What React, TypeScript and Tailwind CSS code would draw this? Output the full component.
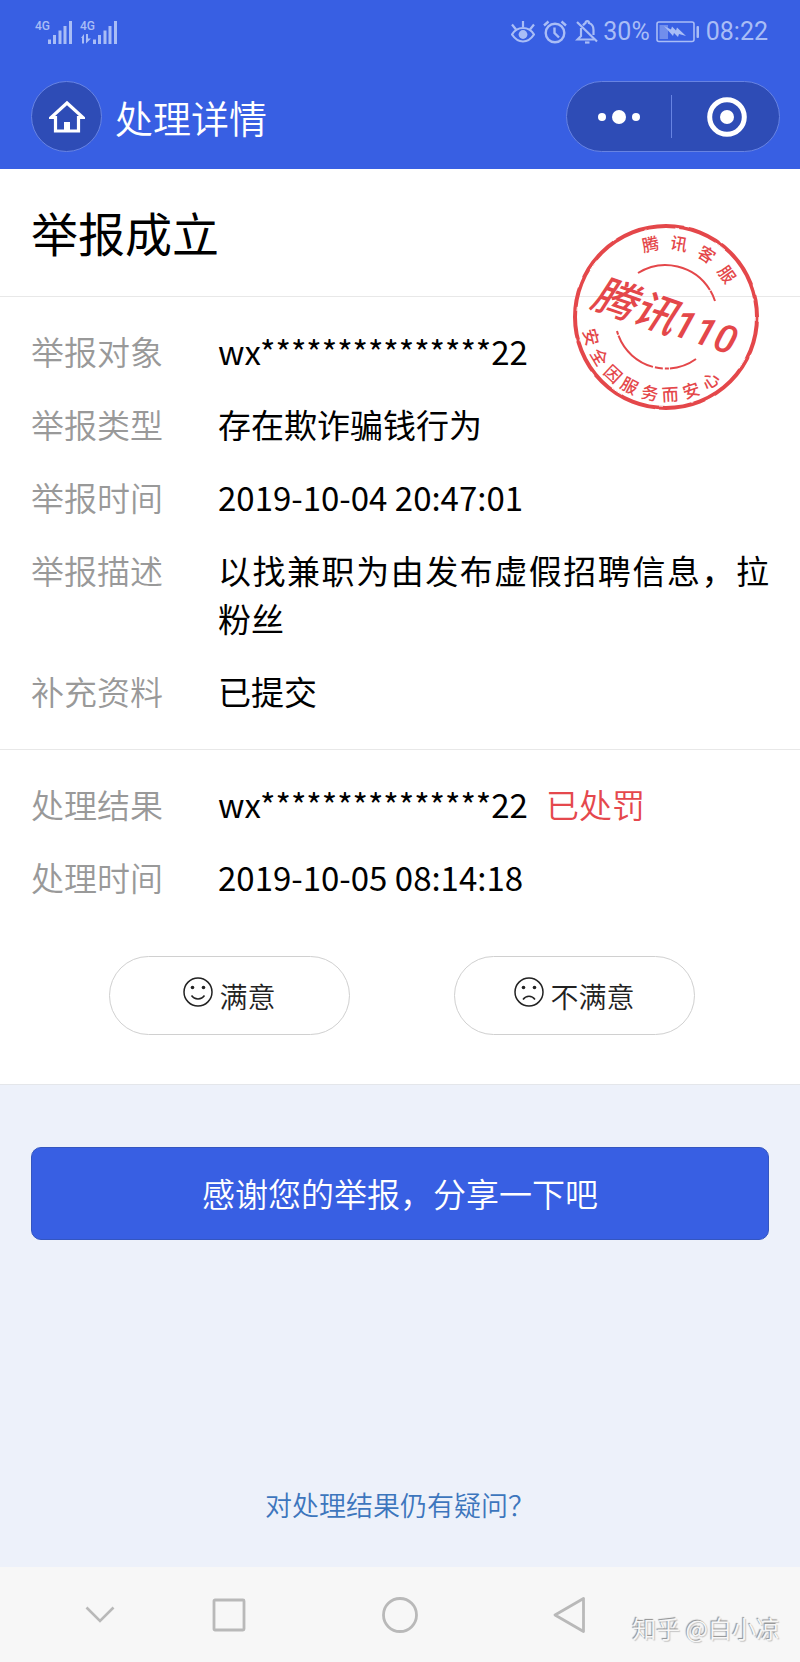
import React, { useState } from 'react';

type Glyph = { char: string; angle: number };

const stampTop: Glyph[] = [
  { char: '腾', angle: -12 },
  { char: '讯', angle: 10 },
  { char: '客', angle: 33 },
  { char: '服', angle: 55 },
];

const stampBottom: Glyph[] = [
  { char: '安', angle: 75 },
  { char: '全', angle: 59 },
  { char: '因', angle: 43 },
  { char: '服', angle: 28 },
  { char: '务', angle: 12 },
  { char: '而', angle: -3 },
  { char: '安', angle: -19 },
  { char: '心', angle: -35 },
];

const SignalIcon = ({ active = false }: { active?: boolean }) => (
  <svg width="38" height="26" viewBox="0 0 38 26" fill="currentColor">
    <text x="0" y="11" fontSize="12" fontFamily="Roboto, sans-serif" fontWeight="500">4G</text>
    {active && <path d="M1 19l3-4v9.5H2V19zM6 15h2v4.5h3l-5 5z" />}
    <rect x="13" y="20.5" width="3" height="4.5" />
    <rect x="18" y="16" width="3" height="9" />
    <rect x="23.5" y="11.5" width="3" height="13.5" />
    <rect x="28.5" y="7" width="3" height="18" />
    <rect x="34" y="2" width="3" height="23" />
  </svg>
);

const EyeIcon = () => (
  <svg width="24" height="24" viewBox="0 0 24 24" fill="none" stroke="currentColor" strokeWidth="2.2">
    <path d="M1 14.5C4 9.5 8 8 12 8s8 1.5 11 6.5C20 19 16 21.5 12 21.5S4 19 1 14.5z" />
    <circle cx="12" cy="14.5" r="4.4" fill="currentColor" stroke="none" />
    <path d="M12 1v6M1 4.5l4 5M23 4.5l-4 5" />
  </svg>
);

const AlarmIcon = () => (
  <svg width="24" height="24" viewBox="0 0 24 24" fill="none" stroke="currentColor" strokeWidth="2.4">
    <circle cx="12" cy="13" r="9.3" />
    <path d="M11.5 7.5V13l4.5 4.5M1 5.5l4.5-4M23 5.5l-4.5-4" />
  </svg>
);

const BellOffIcon = () => (
  <svg width="24" height="24" viewBox="0 0 24 24" fill="none" stroke="currentColor" strokeWidth="2.2">
    <path d="M6 8v8l-3.5 3.5H19M8 5.5C9 4 10 3.5 10.5 3c0-2.5 3.5-2.5 3.5 0 3 1 4.5 3.5 4.5 7v5" />
    <path d="M2 2l20 19.5" />
    <path d="M10 22.5h4.5" />
  </svg>
);

const BatteryIcon = () => (
  <svg width="44" height="22" viewBox="0 0 44 22" fill="none" stroke="currentColor">
    <rect x="1" y="1" width="37" height="19.5" rx="2" strokeWidth="1.6" />
    <rect x="3.5" y="4" width="8.5" height="14" fill="currentColor" stroke="none" opacity="0.5" />
    <path d="M8 5l7 3.5 1-3 4 4 1-3 9 8.5-7-2-1 3-4-4-1 3z" fill="currentColor" stroke="none" />
    <rect x="40.5" y="5" width="2.5" height="12" rx="1" fill="currentColor" stroke="none" />
  </svg>
);

const FaceIcon = ({ sad = false }: { sad?: boolean }) => (
  <svg className="mb-2" width="30" height="30" viewBox="0 0 30 30" fill="none" stroke="#222" strokeWidth="1.5">
    <circle cx="15" cy="15" r="14" />
    <circle cx="9.5" cy="10.5" r="1.8" fill="#222" stroke="none" />
    <circle cx="20.5" cy="10.5" r="1.8" fill="#222" stroke="none" />
    {sad ? <path d="M9 22.5c3-4.5 9-4.5 12 0" /> : <path d="M8.5 18.5c3 4.5 10 4.5 13 0" />}
  </svg>
);

const Stamp = () => (
  <svg
    className="absolute top-[54px] right-10"
    width="188"
    height="188"
    viewBox="-94 -94 188 188"
    fill="#e4474a"
    fontFamily="'Noto Sans CJK SC', sans-serif"
    textAnchor="middle"
  >
    <circle r="91" fill="none" stroke="#e4474a" strokeWidth="4" />
    {/* worn ink along the rim */}
    <circle r="93" fill="none" stroke="#fff" strokeWidth="1.2" strokeDasharray="5 34 3 52 11 48 4 71" />
    <circle r="89.2" fill="none" stroke="#fff" strokeWidth="1" strokeDasharray="4 39 12 57 2 29" />
    <path d="M-28-44A52 52 0 0 1 49-16" fill="none" stroke="#e4474a" strokeWidth="2" strokeDasharray="82 1 30 2" />
    <path d="M-49 14A51 51 0 0 0 30 42" fill="none" stroke="#e4474a" strokeWidth="2" strokeDasharray="4 1 48 2 8 2" />
    {stampTop.map((g) => (
      <text key={g.angle} y="-68" fontSize="17" fontWeight="500" transform={`rotate(${g.angle})`}>{g.char}</text>
    ))}
    {stampBottom.map((g) => (
      <text key={g.angle} y="84" fontSize="17" fontWeight="500" transform={`rotate(${g.angle})`}>{g.char}</text>
    ))}
    <text x="-1" y="15" fontSize="43" fontWeight="500" fontStyle="italic" transform="rotate(19)">
      腾讯<tspan fontFamily="Roboto, sans-serif" fontSize="39">110</tspan>
    </text>
  </svg>
);

const Row = ({ label, children }: { label: string; children: React.ReactNode }) => (
  <div className="flex text-[33px] leading-[48px]">
    <dt className="w-[187px] shrink-0 text-[#999999]">{label}</dt>
    <dd className="flex-1 text-justify font-normal text-black">{children}</dd>
  </div>
);

const App: React.FC = () => {
  const [rating, setRating] = useState<'good' | 'bad' | null>(null);

  return (
    <div className="flex min-h-screen flex-col bg-[#edf1fa] font-['Noto_Sans_CJK_SC',sans-serif] font-[350]">
      {/* Header */}
      <header className="bg-[#385fe3]">
        <div className="flex h-16 items-center justify-between pr-8 pl-[35px] font-[Roboto,'Noto_Sans_CJK_SC',sans-serif] text-[25px] font-normal text-[#a9bdf6]">
          <div className="flex gap-[7px]">
            <SignalIcon />
            <SignalIcon active />
          </div>
          <div className="flex items-center">
            <div className="mr-1 flex gap-2">
              <EyeIcon />
              <AlarmIcon />
              <BellOffIcon />
            </div>
            <span className="mr-[6px]">30%</span>
            <BatteryIcon />
            <span className="ml-[6px]">08:22</span>
          </div>
        </div>

        <div className="flex h-[105px] items-center pr-5 pl-[31px]">
          <button aria-label="首页" className="flex h-[71px] w-[71px] items-center justify-center rounded-full border border-[#6783e2] bg-[#2e4cb6]">
            <svg width="36" height="34" viewBox="0 0 36 34" fill="none" stroke="#fff" strokeWidth="3.2">
              <path d="M2 17.5h4.5V31h23V17.5H34L18 3z" />
              <path d="M18 22v9" strokeWidth="6" />
            </svg>
          </button>
          <h1 className="ml-[13px] flex-1 text-[38px] leading-[48px] text-white">处理详情</h1>
          <div className="flex h-[71px] w-[214px] items-center rounded-full border border-[#6783e2] bg-[#2e4cb6]">
            <button aria-label="更多" className="flex flex-1 justify-center">
              <svg width="42" height="14" viewBox="0 0 42 14" fill="#fff">
                <circle cx="4" cy="7" r="4" />
                <circle cx="21" cy="7" r="7" />
                <circle cx="38" cy="7" r="4" />
              </svg>
            </button>
            <span className="h-[43px] w-px bg-[#6783e2]" />
            <button aria-label="关闭" className="flex flex-1 justify-center pl-1">
              <svg width="40" height="40" viewBox="0 0 40 40">
                <circle cx="20" cy="20" r="17.3" fill="none" stroke="#fff" strokeWidth="5" />
                <circle cx="20" cy="20" r="7" fill="#fff" />
              </svg>
            </button>
          </div>
        </div>
      </header>

      <main className="flex flex-1 flex-col">
        {/* Report result */}
        <div className="relative border-b border-[#e4e6ea] bg-white">
          <h2 className="border-b border-[#e8e8e8] px-[31px] pt-[31px] pb-8 text-[47px] leading-[64px] font-normal text-black">举报成立</h2>
          <dl className="flex flex-col gap-[25px] border-b border-[#e8e8e8] px-[31px] pt-[30px] pb-[34px]">
            <Row label="举报对象">wx***************22</Row>
            <Row label="举报类型">存在欺诈骗钱行为</Row>
            <Row label="举报时间">2019-10-04 20:47:01</Row>
            <Row label="举报描述">以找兼职为由发布虚假招聘信息，拉粉丝</Row>
            <Row label="补充资料">已提交</Row>
          </dl>
          <dl className="flex flex-col gap-[25px] px-[31px] pt-[30px]">
            <Row label="处理结果">
              wx***************22<span className="ml-[18px] font-[350] text-[#e5484d]">已处罚</span>
            </Row>
            <Row label="处理时间">2019-10-05 08:14:18</Row>
          </dl>
          <div className="mt-[55px] flex justify-center gap-[104px] pb-[49px] pl-1 text-[28px] text-[#222222]">
            <button
              onClick={() => setRating('good')}
              aria-pressed={rating === 'good'}
              className="flex h-[79px] w-[241px] items-center justify-center gap-[6px] rounded-full border border-[#d0d0d0]"
            >
              <FaceIcon /> 满意
            </button>
            <button
              onClick={() => setRating('bad')}
              aria-pressed={rating === 'bad'}
              className="flex h-[79px] w-[241px] items-center justify-center gap-[6px] rounded-full border border-[#d0d0d0]"
            >
              <FaceIcon sad /> 不满意
            </button>
          </div>
          <Stamp />
        </div>

        {/* Share */}
        <div className="flex flex-1 flex-col px-[31px] pt-[62px]">
          <button className="h-[93px] w-full rounded-[10px] border border-[#3456c0] bg-[#385fe3] text-[33px] text-white">
            感谢您的举报，分享一下吧
          </button>
          <a href="#help" className="mx-auto mt-auto pb-[42px] text-[27px] leading-10 text-[#3d76bd]">
            对处理结果仍有疑问？
          </a>
        </div>
      </main>

      {/* System navigation */}
      <footer className="relative grid h-[95px] grid-cols-[129fr_171fr_170fr_248fr] items-center bg-[#f7f7f7] pl-[82px]">
        <button aria-label="收起" className="w-9">
          <svg width="36" height="36" viewBox="0 0 36 36" fill="none" stroke="#b9b9b9" strokeWidth="2.6">
            <path d="M4.5 10.5L18 24l13.5-13.5" />
          </svg>
        </button>
        <button aria-label="最近任务" className="w-9">
          <svg width="36" height="36" viewBox="0 0 36 36" fill="none" stroke="#b9b9b9" strokeWidth="2.8">
            <rect x="3" y="3" width="30" height="30" rx="1" />
          </svg>
        </button>
        <button aria-label="主屏幕" className="w-9">
          <svg width="36" height="36" viewBox="0 0 36 36" fill="none" stroke="#b9b9b9" strokeWidth="2.8">
            <circle cx="18" cy="18" r="16.5" />
          </svg>
        </button>
        <button aria-label="返回" className="w-9">
          <svg width="36" height="36" viewBox="0 0 36 36" fill="none" stroke="#b9b9b9" strokeWidth="2.8" strokeLinejoin="round">
            <path d="M31.5 1.5v33L3 18z" />
          </svg>
        </button>
        <span className="absolute right-5 bottom-[18px] text-[24px] leading-8 text-[#f7f7f7] [text-shadow:-1px_-1px_1px_#8c8c8c,1px_1px_1px_#c4c4c4]">
          知乎 @白小凉
        </span>
      </footer>
    </div>
  );
};

export default App;
